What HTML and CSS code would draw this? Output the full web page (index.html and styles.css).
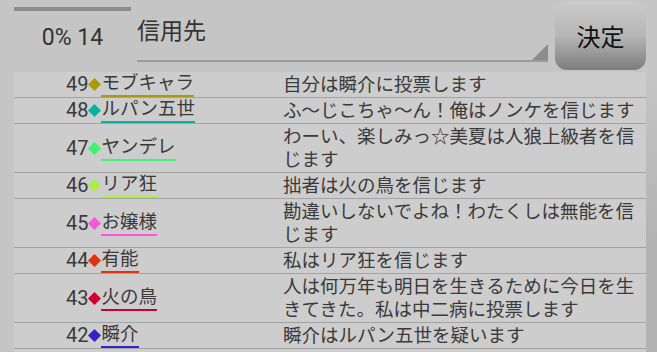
FILE: index.html
```html
<!DOCTYPE html>
<html lang="ja">

<head>
    <meta charset="UTF-8">
    <meta name="viewport" content="width=device-width, initial-scale=1.0">
    <title>投票</title>
    <link rel="stylesheet" href="styles.css">
</head>

<body>

    <div class="app">
        <!-- Top bar -->
        <header class="top">
            <div class="counter">
                <div class="progress"></div>
                <div class="count">0% 14</div>
            </div>
            <div class="spinner">
                <span class="spinner-text">信用先</span>
                <span class="spinner-arrow"></span>
            </div>
            <button class="decide">決定</button>
        </header>

        <!-- Vote list -->
        <div class="main">
            <section class="list">
                <div class="row">
                    <div class="who"><span class="num">49</span><svg class="dia" viewBox="0 0 12 12" style="color:#a99a10"><polygon points="6,0 12,6 6,12 0,6" fill="currentColor"/></svg><span class="name" style="border-color:#a99a10">モブキャラ</span></div>
                    <div class="msg">自分は瞬介に投票します</div>
                </div>
                <div class="row">
                    <div class="who"><span class="num">48</span><svg class="dia" viewBox="0 0 12 12" style="color:#12ada0"><polygon points="6,0 12,6 6,12 0,6" fill="currentColor"/></svg><span class="name" style="border-color:#12ada0">ルパン五世</span></div>
                    <div class="msg">ふ〜じこちゃ〜ん！俺はノンケを信じます</div>
                </div>
                <div class="row">
                    <div class="who"><span class="num">47</span><svg class="dia" viewBox="0 0 12 12" style="color:#44ee77"><polygon points="6,0 12,6 6,12 0,6" fill="currentColor"/></svg><span class="name" style="border-color:#44ee77">ヤンデレ</span></div>
                    <div class="msg">わーい、楽しみっ☆美夏は人狼上級者を信じます</div>
                </div>
                <div class="row">
                    <div class="who"><span class="num">46</span><svg class="dia" viewBox="0 0 12 12" style="color:#aaee44"><polygon points="6,0 12,6 6,12 0,6" fill="currentColor"/></svg><span class="name" style="border-color:#aaee44">リア狂</span></div>
                    <div class="msg">拙者は火の鳥を信じます</div>
                </div>
                <div class="row">
                    <div class="who"><span class="num">45</span><svg class="dia" viewBox="0 0 12 12" style="color:#ff55dd"><polygon points="6,0 12,6 6,12 0,6" fill="currentColor"/></svg><span class="name" style="border-color:#ff55dd">お嬢様</span></div>
                    <div class="msg">勘違いしないでよね！わたくしは無能を信じます</div>
                </div>
                <div class="row">
                    <div class="who"><span class="num">44</span><svg class="dia" viewBox="0 0 12 12" style="color:#dd3311"><polygon points="6,0 12,6 6,12 0,6" fill="currentColor"/></svg><span class="name" style="border-color:#dd3311">有能</span></div>
                    <div class="msg">私はリア狂を信じます</div>
                </div>
                <div class="row">
                    <div class="who"><span class="num">43</span><svg class="dia" viewBox="0 0 12 12" style="color:#cc0033"><polygon points="6,0 12,6 6,12 0,6" fill="currentColor"/></svg><span class="name" style="border-color:#cc0033">火の鳥</span></div>
                    <div class="msg">人は何万年も明日を生きるために今日を生きてきた。私は中二病に投票します</div>
                </div>
                <div class="row">
                    <div class="who"><span class="num">42</span><svg class="dia" viewBox="0 0 12 12" style="color:#3322cc"><polygon points="6,0 12,6 6,12 0,6" fill="currentColor"/></svg><span class="name" style="border-color:#3322cc">瞬介</span></div>
                    <div class="msg">瞬介はルパン五世を疑います</div>
                </div>
            </section>
            <div class="edge"></div>
        </div>
    </div>

</body>
</html>
```

FILE: styles.css
```css
/* General Reset */
* {
    margin: 0;
    padding: 0;
    box-sizing: border-box;
}

body {
    font-family: Roboto, "Noto Sans CJK JP", sans-serif;
    color: #3a3a3a;
    background-color: #c5c5c5;
}

.app {
    width: 657px;
    height: 352px;
    overflow: hidden;
    display: flex;
    flex-direction: column;
}

/* Top bar */
.top {
    display: flex;
    height: 72px;
    padding-left: 14px;
    flex-shrink: 0;
}

.counter {
    width: 117px;
    display: flex;
    flex-direction: column;
}

    .counter .progress {
        height: 4px;
        margin-top: 7px;
        background-color: #8d8d8d;
    }

    .counter .count {
        margin-top: 13px;
        font-size: 23px;
        line-height: 27px;
        text-align: center;
        color: #333;
    }

.spinner {
    width: 411px;
    height: 62px;
    margin-left: 6px;
    padding-top: 17px;
    display: flex;
    justify-content: space-between;
    border-bottom: 2px solid #9c9c9c;
}

.spinner-text {
    font-size: 23px;
    line-height: 30px;
    color: #333;
}

.spinner-arrow {
    align-self: flex-end;
    width: 0;
    height: 0;
    border-left: 16px solid transparent;
    border-bottom: 16px solid #8c8c8c;
}

.decide {
    width: 91px;
    height: 69px;
    margin-top: 1px;
    margin-left: 7px;
    border: none;
    border-radius: 12px;
    background: linear-gradient(#cbcbcb, #b6b6b6 50%, #7d7d7d);
    font-family: "Noto Sans CJK JP", sans-serif;
    font-size: 24px;
    color: #111;
}

/* Vote list */
.main {
    flex: 1;
    display: flex;
    padding-left: 14px;
}

.list {
    width: 632px;
    background-color: #cdcdcd;
}

.edge {
    flex: 1;
    background: linear-gradient(#c5c5c5, #b3b3b3 60%);
}

.row {
    display: grid;
    grid-template-columns: 269px 1fr;
    border-bottom: 1px solid #a3a3a3;
    font-size: 18.5px;
    line-height: 23px;
}

    .row .who {
        display: flex;
        align-items: center;
        padding-left: 52px;
    }

    .row .num {
        font-size: 20px;
    }

    .row .dia {
        width: 13px;
        height: 13px;
    }

    .row .name {
        display: inline-block;
        border-bottom: 2px solid;
    }

    .row .msg {
        padding: 2px 8px 0 0;
    }
```
